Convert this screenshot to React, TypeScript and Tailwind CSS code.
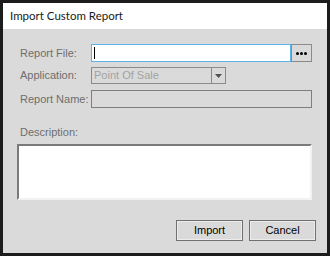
import React from "react";

const label = "text-[11px] text-[#6e6e6e] leading-[13px]";

export default function App() {
  return (
    <div
      className="w-[330px] h-[256px] border-[3px] border-[#1c1c1c] bg-[#dadada] flex flex-col"
      style={{ fontFamily: '"Liberation Sans", Arial, sans-serif' }}
    >
      <div
        className="h-[26px] bg-white flex items-center pl-[7px] text-[11.5px] text-[#1a1a1a] shrink-0"
        style={{ fontFamily: 'Lato, "Liberation Sans", sans-serif' }}
      >
        Import Custom Report
      </div>
      <div className="flex-1 flex flex-col pl-[14px] pr-[15px] pt-[15px]">
        <div className="flex items-center h-[18px] pl-[3px]">
          <div className={`${label} w-[71px]`}>Report File:</div>
          <div className="flex-1 h-[18px] bg-white border border-[#5cb3ec] flex items-center pl-[2px]">
            <div className="w-px h-[12px] bg-black" />
          </div>
          <div className="w-[21px] h-[18px] border border-[#8a8a8a] flex items-center justify-center gap-[1px]">
            <div className="w-[3px] h-[3px] rounded-full bg-black" />
            <div className="w-[3px] h-[3px] rounded-full bg-black" />
            <div className="w-[3px] h-[3px] rounded-full bg-black" />
          </div>
        </div>
        <div className="flex items-center h-[17px] mt-[5px] pl-[3px]">
          <div className={`${label} w-[71px]`}>Application:</div>
          <div className="w-[135px] h-[17px] border border-[#8a8a8a] flex items-center">
            <div className="flex-1 pl-[2px] text-[11px] text-[#a3a3a3] leading-[13px]">Point Of Sale</div>
            <div className="w-[14px] h-full border-l border-[#8a8a8a] flex items-center justify-center">
              <svg width="7" height="4" viewBox="0 0 7 4">
                <polygon points="0,0 7,0 3.5,4" fill="#505050" />
              </svg>
            </div>
          </div>
        </div>
        <div className="flex items-center h-[18px] mt-[6px] pl-[3px]">
          <div className={`${label} w-[71px]`}>Report Name:</div>
          <div className="flex-1 h-[18px] border border-[#7e7e7e]" />
        </div>
        <div className={`${label} mt-[18px] pl-[3px]`}>Description:</div>
        <div className="mt-[5px] h-[56px] bg-white border-2 border-t-[#7a7a7a] border-l-[#7a7a7a] border-b-[#f2f2f2] border-r-[#f2f2f2]" />
        <div className="flex justify-end gap-[6px] mt-[20px] -mr-[4px]">
          <button className="w-[67px] h-[21px] border border-[#707070] shadow-[inset_0_0_0_1px_#ececec] bg-[#dadada] text-[11px] text-black leading-none">
            Import
          </button>
          <button className="w-[67px] h-[21px] border border-[#707070] shadow-[inset_0_0_0_1px_#ececec] bg-[#dadada] text-[11px] text-black leading-none">
            Cancel
          </button>
        </div>
      </div>
    </div>
  );
}
